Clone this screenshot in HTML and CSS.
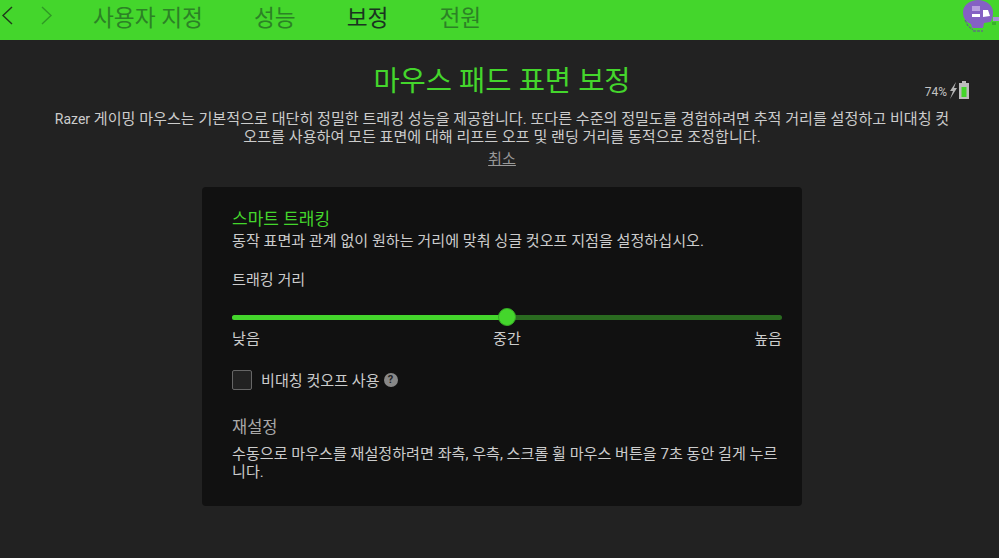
FILE: index.html
```html
<!DOCTYPE html>
<html lang="ko">
<head>
    <meta charset="UTF-8">
    <title>마우스 패드 표면 보정</title>
    <link rel="stylesheet" href="styles.css">
</head>
<body>
    <header class="topbar">
        <div class="arrows">
            <svg class="arrow" width="14" height="20" viewBox="0 0 14 20"><path d="M12 1 L3 9.5 L12 18" fill="none" stroke="#1f3a1a" stroke-width="1.4"/></svg>
            <svg class="arrow next" width="14" height="20" viewBox="0 0 14 20"><path d="M2 1 L11 9.5 L2 18" fill="none" stroke="#2f9a25" stroke-width="1.4"/></svg>
        </div>
        <nav class="tabs">
            <span class="tab">사용자 지정</span>
            <span class="tab">성능</span>
            <span class="tab active">보정</span>
            <span class="tab">전원</span>
        </nav>
        <svg class="avatar" width="36" height="33" viewBox="0 0 36 33">
            <path d="M30 17 L36 17 L36 21 L30 21 Z" fill="#a88bd8"/>
            <rect x="29" y="22" width="4" height="3" fill="#3aae2c"/>
            <path d="M0 12 C0 5 7 0 15 0 C23 0 30 5 30 12 C30 17 29 21 27 22 L21 23 L20 28 L9 28 L8 24 C3 22 0 18 0 12 Z" fill="#8560c4"/>
            <rect x="9" y="6" width="8" height="5" fill="#b9a0e0"/>
            <rect x="9" y="14" width="8" height="3" fill="#fff"/>
            <path d="M20 10 L25 10 L27 16 L20 17 Z" fill="#fff"/>
            <path d="M2 20 L5 26 L10 30 M10 31 L20 31" fill="none" stroke="#6a45a5" stroke-width="1" stroke-dasharray="3 1"/>
        </svg>
    </header>

    <main class="page">
        <div class="battery">
            <span>74%</span>
            <svg width="8" height="17" viewBox="0 0 8 17"><path d="M7 0 L1 9 L4 9 L1 17 L8 6 L5 6 Z" fill="#b5b5b5"/></svg>
            <svg width="10" height="18" viewBox="0 0 10 18"><path d="M3 0 H7 V2 H10 V18 H0 V2 H3 Z" fill="#bdbdbd"/><rect x="2.5" y="6" width="5" height="10" fill="#44d62c"/></svg>
        </div>

        <h1 class="title">마우스 패드 표면 보정</h1>
        <p class="intro"><span class="latin">Razer</span> 게이밍 마우스는 기본적으로 대단히 정밀한 트래킹 성능을 제공합니다. 또다른 수준의 정밀도를 경험하려면 추적 거리를 설정하고 비대칭 컷오프를 사용하여 모든 표면에 대해 리프트 오프 및 랜딩 거리를 동적으로 조정합니다.</p>
        <a class="cancel">취소</a>

        <section class="card">
            <h2 class="card-title">스마트 트래킹</h2>
            <p class="card-desc">동작 표면과 관계 없이 원하는 거리에 맞춰 싱글 컷오프 지점을 설정하십시오.</p>

            <div class="label">트래킹 거리</div>
            <div class="slider">
                <div class="slider-fill"></div>
                <div class="slider-thumb"></div>
            </div>
            <div class="scale">
                <span>낮음</span>
                <span>중간</span>
                <span>높음</span>
            </div>

            <div class="check-row">
                <span class="checkbox"></span>
                <span class="check-label">비대칭 컷오프 사용</span>
                <span class="help">?</span>
            </div>

            <div class="reset-title">재설정</div>
            <p class="reset-desc">수동으로 마우스를 재설정하려면 좌측, 우측, 스크롤 휠 마우스 버튼을 7초 동안 길게 누르니다.</p>
        </section>
    </main>
</body>
</html>
```

FILE: styles.css
```css
* {
    box-sizing: border-box;
}

html, body {
    height: 100%;
}

body {
    margin: 0;
    background-color: #222222;
    color: #cccccc;
    font-family: Roboto, "Noto Sans CJK KR", sans-serif;
    font-size: 15.1px;
    overflow: hidden;
}

/* Top bar */
.topbar {
    position: relative;
    display: flex;
    align-items: center;
    height: 40px;
    padding-bottom: 8px;
    background-color: #44d62c;
}

.arrows {
    display: flex;
    gap: 26px;
    width: 93px;
}

.tabs {
    display: flex;
    gap: 51px;
}

.tab {
    font-size: 22.7px;
    color: #2c8226;
}

.tab.active {
    color: #1a3320;
}

.avatar {
    position: absolute;
    top: 0;
    right: 0;
}

/* Page content */
.page {
    position: relative;
    display: flex;
    flex-direction: column;
    align-items: center;
    padding: 24px 0 0 5px;
}

.battery {
    position: absolute;
    top: 41px;
    right: 30px;
    display: flex;
    align-items: flex-end;
    gap: 2px;
    font-size: 12px;
    line-height: 14px;
    color: #c4c4c4;
}

.title {
    margin: 0;
    font-size: 28.5px;
    font-weight: 400;
    line-height: 36px;
    color: #44d62c;
}

.intro {
    width: 900px;
    margin: 10px 0 0;
    line-height: 18px;
    text-align: center;
    word-break: break-all;
}

.latin {
    font-size: 14px;
}

.cancel {
    margin-top: 3px;
    line-height: 20px;
    color: #999999;
    text-decoration: underline;
}

/* Card */
.card {
    width: 600px;
    height: 319px;
    margin-top: 18px;
    padding: 20px 20px 0 30px;
    background-color: #111111;
    border-radius: 4px;
}

.card-title {
    margin: 0;
    font-size: 17px;
    font-weight: 400;
    line-height: 24px;
    color: #44d62c;
}

.card-desc {
    margin: 0;
    line-height: 20px;
}

.label {
    margin-top: 19px;
    line-height: 20px;
}

.slider {
    position: relative;
    height: 5px;
    margin-top: 25px;
    background-color: #2a6b20;
    border-radius: 3px;
}

.slider-fill {
    width: 50%;
    height: 100%;
    background-color: #44d62c;
    border-radius: 3px;
}

.slider-thumb {
    position: absolute;
    top: -7px;
    left: 50%;
    width: 18px;
    height: 18px;
    margin-left: -9px;
    background-color: #44d62c;
    border: 1px solid #36a825;
    border-radius: 50%;
}

.scale {
    display: flex;
    justify-content: space-between;
    margin-top: 9px;
    line-height: 20px;
}

.check-row {
    display: flex;
    align-items: center;
    gap: 9px;
    margin-top: 21px;
}

.check-label {
    margin-top: -2px;
}

.checkbox {
    width: 20px;
    height: 20px;
    background-color: #222222;
    border: 1px solid #666666;
    border-radius: 2px;
}

.help {
    width: 14px;
    height: 14px;
    margin-left: -5px;
    background-color: #888888;
    border-radius: 50%;
    color: #222222;
    font-size: 11px;
    font-weight: 700;
    line-height: 14px;
    text-align: center;
}

.reset-title {
    margin-top: 26px;
    font-size: 16.5px;
    line-height: 24px;
    color: #a8a8a8;
}

.reset-desc {
    margin: 5px 0 0;
    line-height: 18px;
    word-break: break-all;
}
```
